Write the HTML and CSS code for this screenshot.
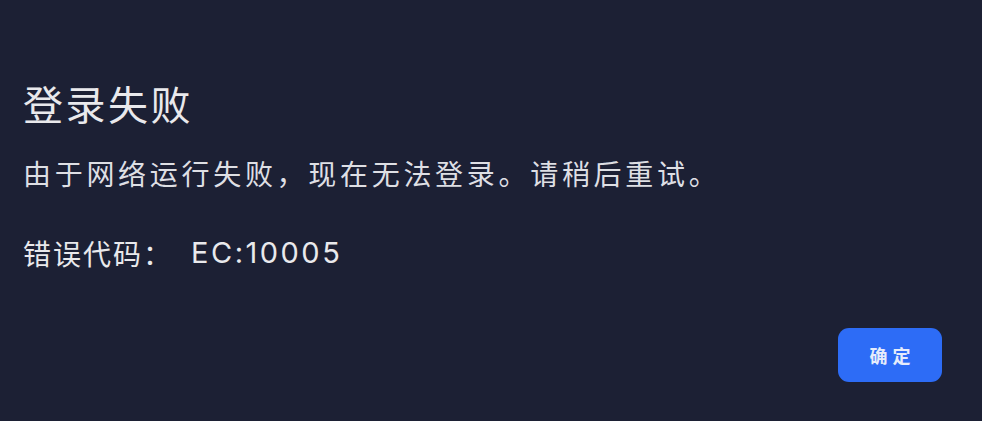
FILE: index.html
```html
<!DOCTYPE html>
<html lang="zh-CN">
<head>
<meta charset="utf-8">
<link rel="stylesheet" href="styles.css">
</head>
<body>
<div class="dialog">
  <h1 class="title">登录失败</h1>
  <p class="message">由于网络运行失败，现在无法登录。请稍后重试。</p>
  <p class="code"><span class="code-label">错误代码：</span><span class="code-value">EC:10005</span></p>
  <div class="actions">
    <button class="ok">确定</button>
  </div>
</div>
</body>
</html>
```
FILE: styles.css
```css
html, body {
  margin: 0;
  padding: 0;
  background: #1c2034;
}
body {
  width: 982px;
  height: 421px;
  overflow: hidden;
  font-family: "Noto Sans CJK SC", "Noto Sans", sans-serif;
  color: #e9e9ec;
}
.dialog {
  display: flex;
  flex-direction: column;
  padding: 78px 40px 0 23px;
}
.title {
  margin: 0;
  font-size: 40px;
  font-weight: 400;
  line-height: 50px;
  letter-spacing: 2.5px;
}
.message {
  margin: 25px 0 0;
  font-size: 28px;
  font-weight: 400;
  line-height: 40px;
  letter-spacing: 3.7px;
  color: #dedfe4;
}
.code {
  margin: 40px 0 0;
  font-size: 28px;
  line-height: 40px;
  display: flex;
  align-items: center;
}
.code-label {
  letter-spacing: 2px;
}
.code-value {
  margin-left: 18px;
  font-family: "Inter", "Noto Sans", sans-serif;
  font-weight: 400;
  font-size: 29px;
  letter-spacing: 2.5px;
}
.actions {
  display: flex;
  justify-content: flex-end;
  margin-top: 55px;
}
.ok {
  width: 104px;
  height: 54px;
  border: none;
  border-radius: 11px;
  background: #2d6cf6;
  color: #e6ecfb;
  font-family: "Noto Sans CJK SC", sans-serif;
  font-size: 18px;
  font-weight: 700;
  letter-spacing: 5px;
  padding: 0 0 0 5px;
}
```
